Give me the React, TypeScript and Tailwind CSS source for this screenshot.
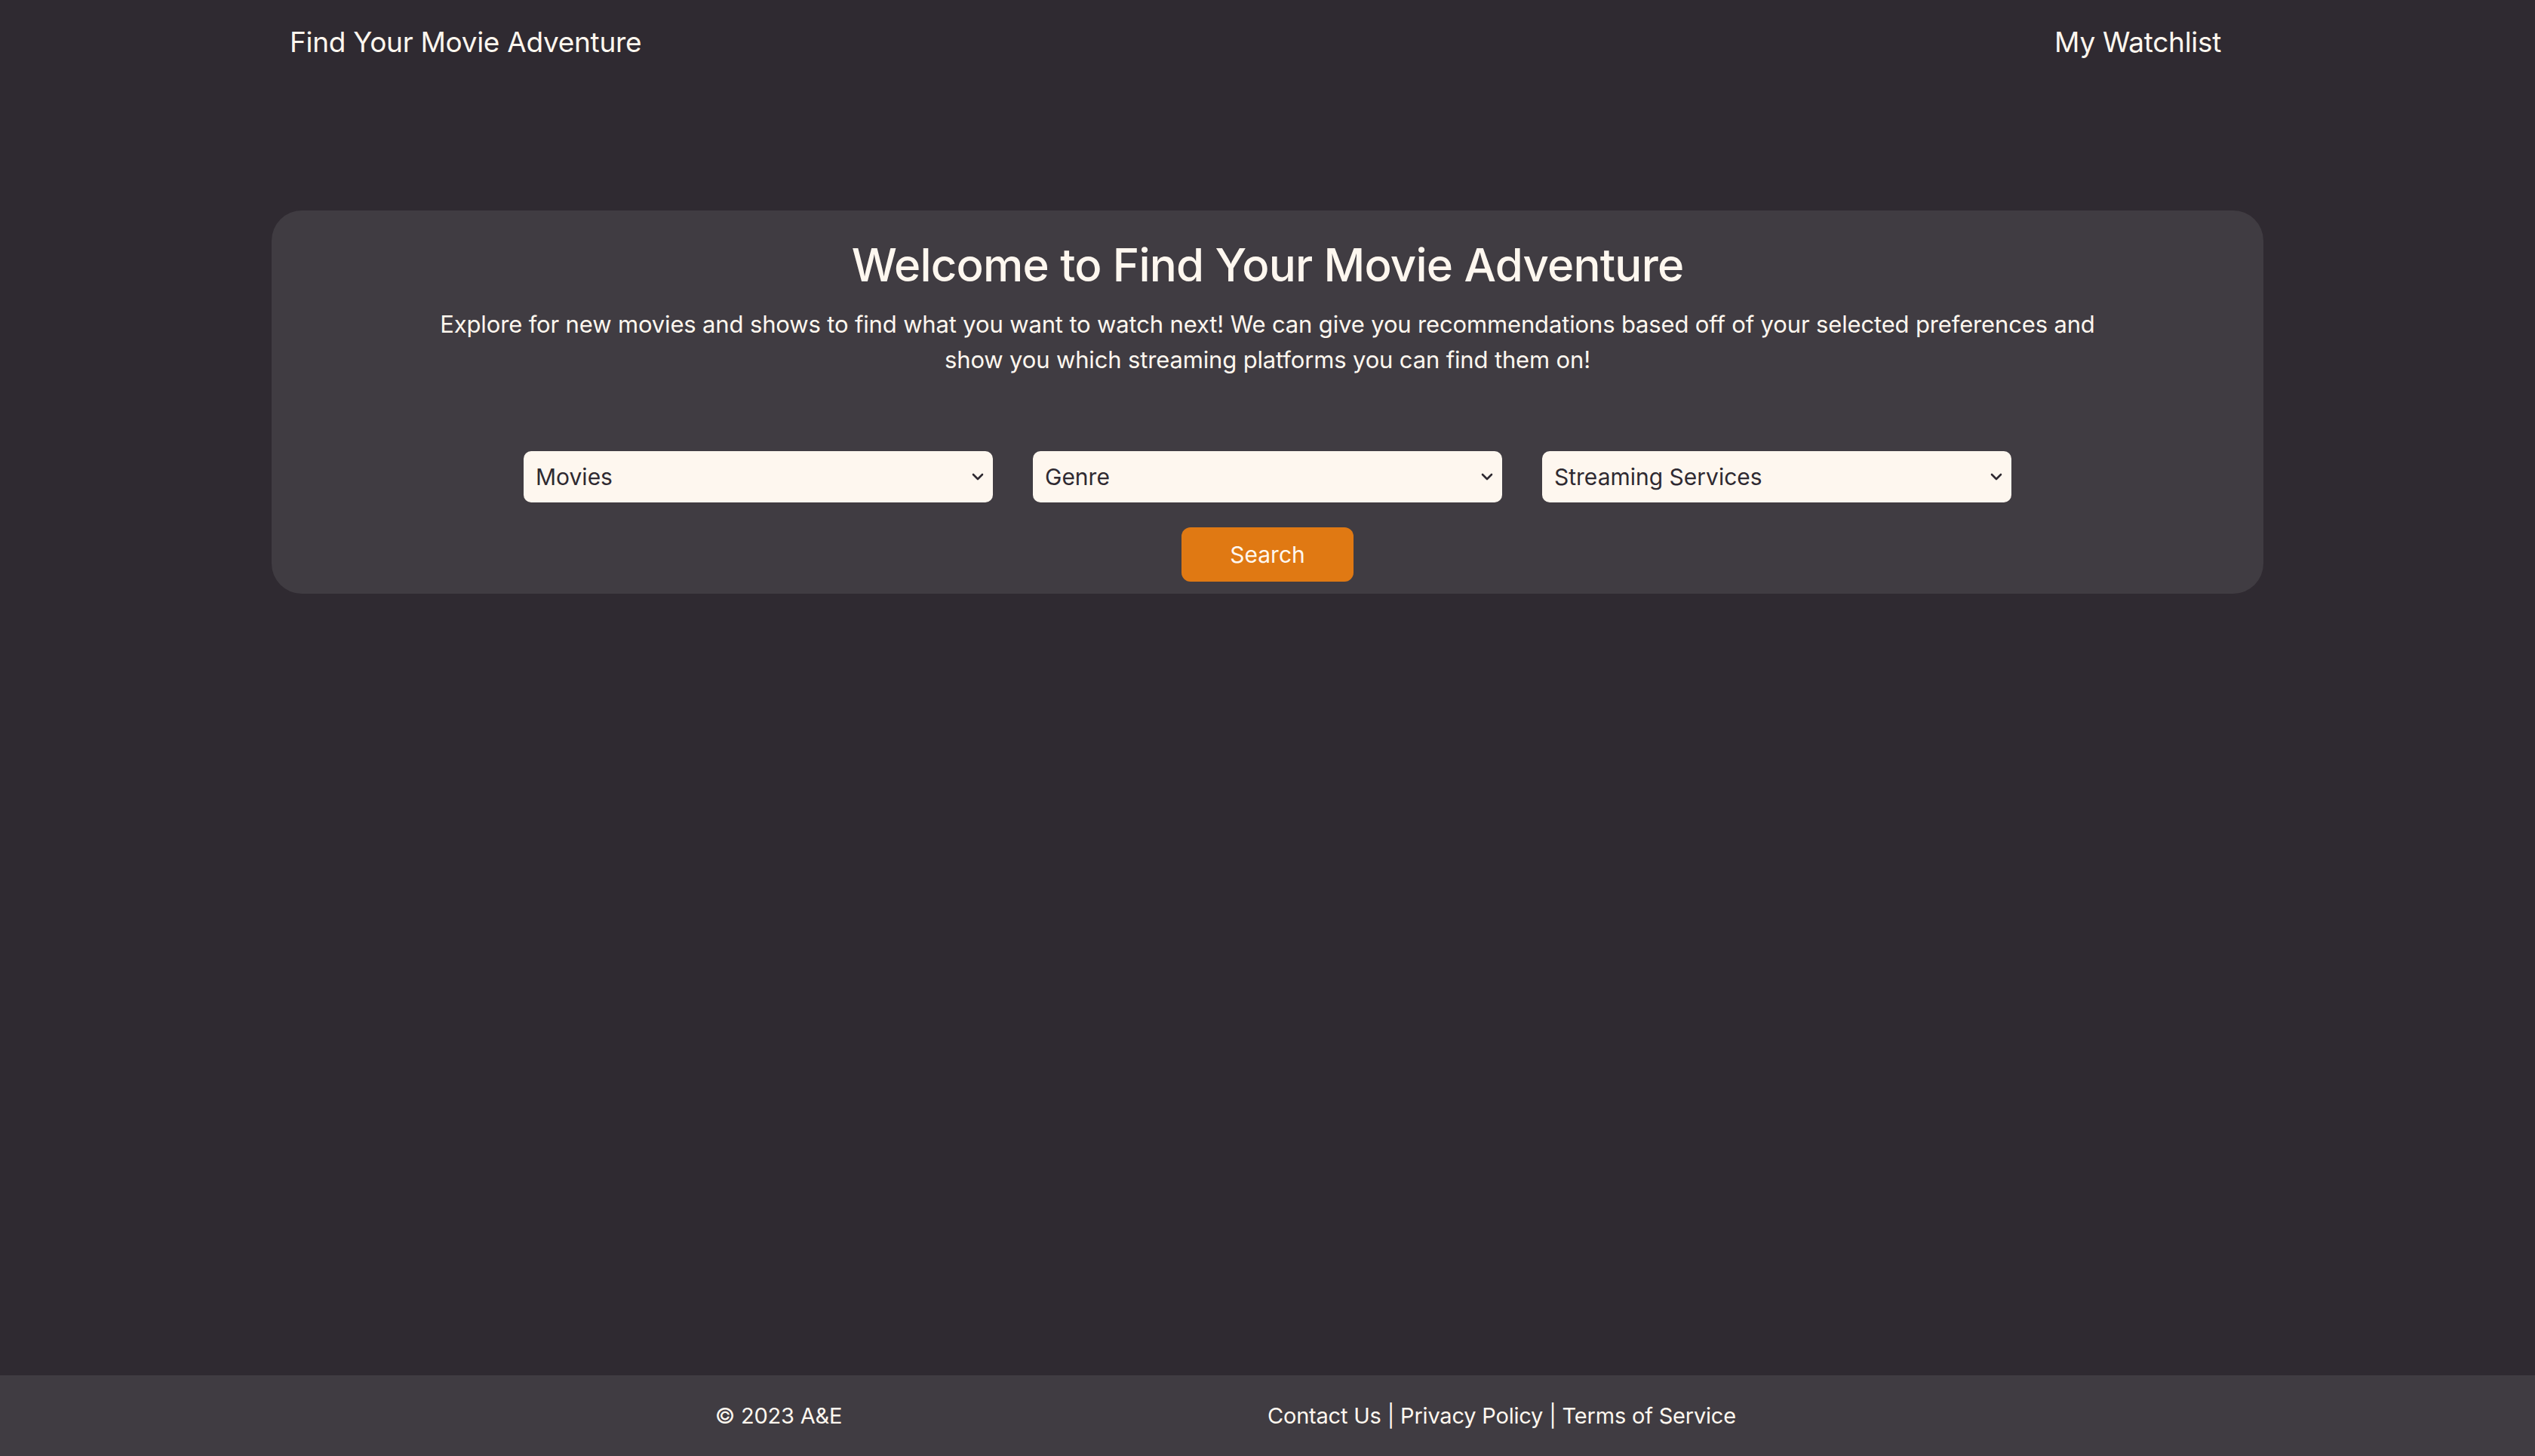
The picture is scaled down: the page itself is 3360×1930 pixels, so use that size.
import React from "react";

function Chevron() {
  return (
    <svg
      className="pointer-events-none absolute right-[12px] top-1/2 -translate-y-1/2"
      width="16"
      height="10"
      viewBox="0 0 16 10"
      fill="none"
    >
      <path d="M2 2 L8 8 L14 2" stroke="#2f2a31" strokeWidth="2.6" strokeLinecap="round" strokeLinejoin="round" />
    </svg>
  );
}

function Dropdown({ label }: { label: string }) {
  return (
    <div className="relative w-[622px] h-[68px]">
      <select
        defaultValue={label}
        className="appearance-none w-full h-full rounded-[10px] bg-[#fef7ef] text-[#2f2a31] text-[30px] pl-[16px] pr-[40px] outline-none"
        style={{ fontFamily: "Inter, 'Noto Sans', sans-serif" }}
      >
        <option value={label}>{label}</option>
      </select>
      <Chevron />
    </div>
  );
}

export default function App() {
  return (
    <div
      className="min-h-screen flex flex-col bg-[#2f2a31] text-[#fef7ef]"
      style={{ fontFamily: "Inter, 'Noto Sans', sans-serif" }}
    >
      <header className="h-[112px] flex items-center justify-between pl-[384px] pr-[416px]">
        <a className="text-[37px] tracking-[-0.3px]">Find Your Movie Adventure</a>
        <a className="text-[37px] tracking-[-0.3px]">My Watchlist</a>
      </header>

      <main className="flex-1 pt-[167px] px-[360px]">
        <section className="bg-[#403c42] rounded-[40px] pt-[34px] pb-[16px] flex flex-col items-center">
          <h1 className="text-[60px] leading-[76px] font-medium tracking-[-0.8px]">
            Welcome to Find Your Movie Adventure
          </h1>
          <p className="mt-[17px] max-w-[2240px] text-center text-[31px] leading-[47px] tracking-[-0.15px]">
            Explore for new movies and shows to find what you want to watch next! We can give you recommendations based off of your selected preferences and show you which streaming platforms you can find them on!
          </p>
          <div className="mt-[98px] flex gap-[53px]">
            <Dropdown label="Movies" />
            <Dropdown label="Genre" />
            <Dropdown label="Streaming Services" />
          </div>
          <button className="mt-[33px] w-[228px] h-[72px] rounded-[12px] bg-[#e07913] text-[30px] text-[#fef7ef]">
            Search
          </button>
        </section>
      </main>

      <footer className="h-[107px] bg-[#403c42] grid grid-cols-2 items-center px-[384px] text-[29px] tracking-[-0.2px]">
        <div className="text-center">© 2023 A&amp;E</div>
        <div className="text-left">
          <a>Contact Us</a> | <a>Privacy Policy</a> | <a>Terms of Service</a>
        </div>
      </footer>
    </div>
  );
}
